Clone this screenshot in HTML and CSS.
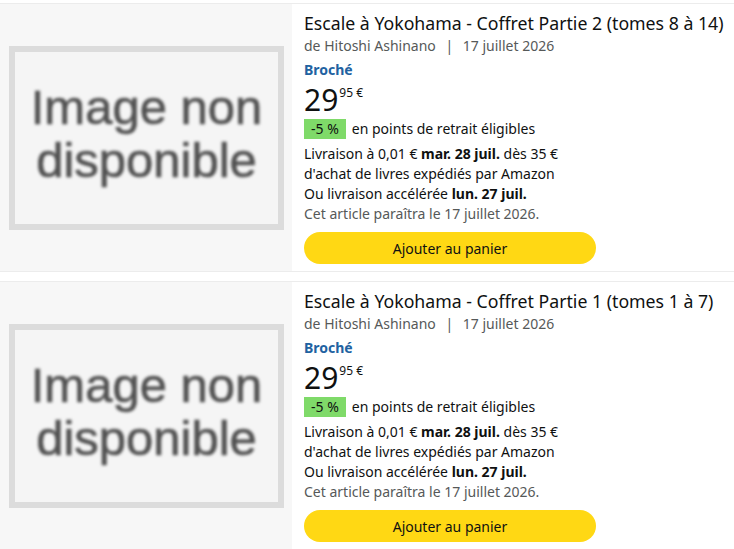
FILE: index.html
```html
<!DOCTYPE html>
<html lang="fr">
<head>
<meta charset="utf-8">
<link rel="stylesheet" href="styles.css">
</head>
<body>
<div class="list">
  <div class="card">
    <div class="thumb">
      <div class="noimg"><span>Image non<br>disponible</span></div>
    </div>
    <div class="info">
      <div class="title">Escale à Yokohama - Coffret Partie 2 (tomes 8 à 14)</div>
      <div class="byline">de Hitoshi Ashinano <span class="sep">|</span> 17 juillet 2026</div>
      <div class="format">Broché</div>
      <div class="price"><span class="whole">29</span><span class="frac">95 €</span></div>
      <div class="points"><span class="badge">-5 %</span> en points de retrait éligibles</div>
      <div class="delivery">
        <div>Livraison à 0,01 € <b>mar. 28 juil.</b> dès 35 €</div>
        <div>d'achat de livres expédiés par Amazon</div>
        <div>Ou livraison accélérée <b>lun. 27 juil.</b></div>
        <div class="muted">Cet article paraîtra le 17 juillet 2026.</div>
      </div>
      <button class="cart">Ajouter au panier</button>
    </div>
  </div>
  <div class="card">
    <div class="thumb">
      <div class="noimg"><span>Image non<br>disponible</span></div>
    </div>
    <div class="info">
      <div class="title">Escale à Yokohama - Coffret Partie 1 (tomes 1 à 7)</div>
      <div class="byline">de Hitoshi Ashinano <span class="sep">|</span> 17 juillet 2026</div>
      <div class="format">Broché</div>
      <div class="price"><span class="whole">29</span><span class="frac">95 €</span></div>
      <div class="points"><span class="badge">-5 %</span> en points de retrait éligibles</div>
      <div class="delivery">
        <div>Livraison à 0,01 € <b>mar. 28 juil.</b> dès 35 €</div>
        <div>d'achat de livres expédiés par Amazon</div>
        <div>Ou livraison accélérée <b>lun. 27 juil.</b></div>
        <div class="muted">Cet article paraîtra le 17 juillet 2026.</div>
      </div>
      <button class="cart">Ajouter au panier</button>
    </div>
  </div>
</div>
</body>
</html>
```
FILE: styles.css
```css
html, body {
  margin: 0;
  padding: 0;
  background: #fff;
}
body {
  font-family: "Noto Sans", "Open Sans", Arial, sans-serif;
  color: #0f1111;
  font-size: 14px;
  overflow: hidden;
}
.list {
  display: flex;
  flex-direction: column;
  gap: 9px;
  padding-top: 3px;
}
.card {
  display: flex;
  height: 269px;
  border-top: 1px solid #ececec;
  border-bottom: 1px solid #ececec;
  box-sizing: border-box;
}
.thumb {
  width: 292px;
  flex: none;
  background: #f7f7f7;
  display: flex;
  align-items: center;
  padding-left: 9px;
  box-sizing: border-box;
}
.noimg {
  width: 275px;
  height: 184px;
  box-sizing: border-box;
  border: 6px solid #dcdcdc;
  background: #f5f5f5;
  display: flex;
  align-items: center;
  justify-content: center;
}
.noimg span {
  font-family: "Liberation Sans", Arial, sans-serif;
  font-size: 49px;
  line-height: 53px;
  color: #505050;
  text-align: center;
  filter: blur(1.4px);
  margin-top: -8px;
  -webkit-text-stroke: 0.6px #505050;
}
.info {
  padding: 7px 0 0 12px;
  display: flex;
  flex-direction: column;
  align-items: flex-start;
}
.title {
  font-size: 17.7px;
  line-height: 24px;
}
.byline {
  color: #565959;
  line-height: 20px;
  margin-top: 1px;
}
.sep {
  margin: 0 6px;
}
.format {
  color: #2162a1;
  font-weight: 700;
  line-height: 20px;
  margin-top: 4px;
}
.price {
  display: flex;
  align-items: flex-start;
  margin-top: 4px;
  height: 32px;
}
.whole {
  font-size: 30px;
  line-height: 32px;
}
.frac {
  font-size: 12px;
  line-height: 12px;
  margin-top: 3px;
  margin-left: 1px;
}
.points {
  margin-top: 3px;
  line-height: 20px;
  display: flex;
  align-items: center;
  gap: 6px;
}
.badge {
  background: #7fda69;
  padding: 0 7px;
  line-height: 20px;
}
.delivery {
  margin-top: 5px;
  line-height: 20px;
}
.delivery b {
  font-weight: 700;
}
.muted {
  color: #565959;
}
.cart {
  margin-top: 8px;
  width: 292px;
  height: 32px;
  border: none;
  border-radius: 16px;
  background: #ffd814;
  font-family: inherit;
  font-size: 14px;
  color: #0f1111;
}
```
